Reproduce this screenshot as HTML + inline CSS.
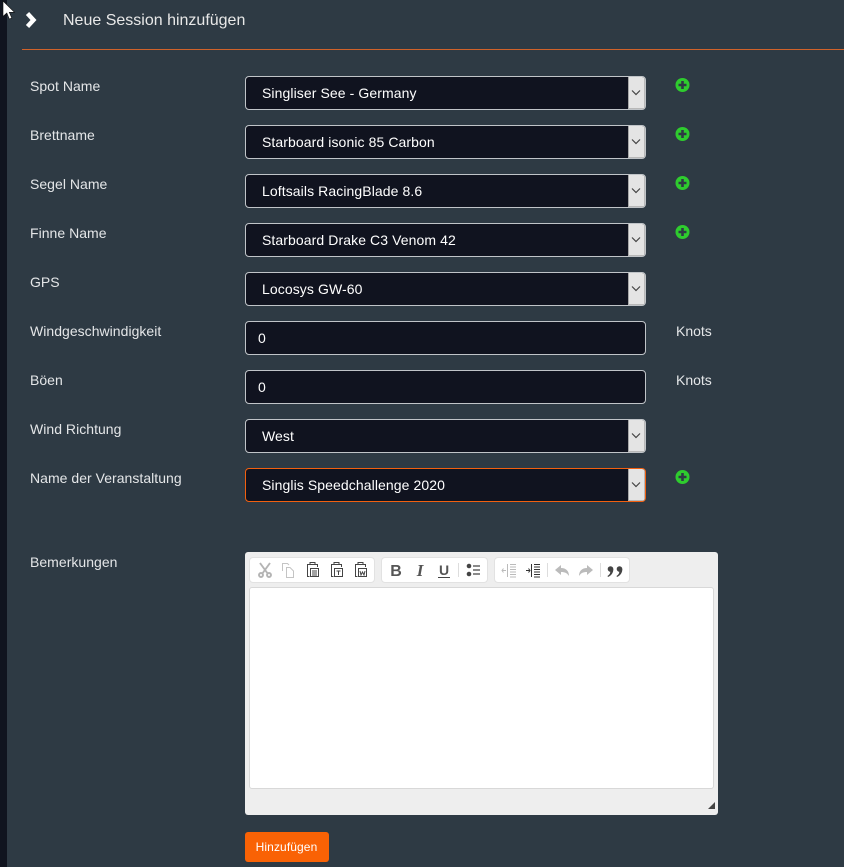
<!DOCTYPE html>
<html><head><meta charset="utf-8"><style>
*{box-sizing:border-box}
html,body{margin:0;padding:0}
body{width:844px;height:867px;background:#2e3a44;position:relative;overflow:hidden;font-family:"Liberation Sans",Arial,sans-serif;color:#e4e6e8;font-size:14px}
.a{position:absolute}
.side{left:0;top:0;width:7px;height:867px;background:#10141f}
.lb{position:absolute;left:30px;line-height:20px;white-space:nowrap;letter-spacing:.03px}
.c{position:absolute;left:245px;width:401px;height:34px;background:#10131f;border:1px solid #c0c4c8;border-radius:4px;color:#fff;line-height:32px;padding-left:16px;white-space:nowrap;overflow:hidden;letter-spacing:.09px}
.c.in{padding-left:12px}
.c.o{border-color:#f26010}
.c i{position:absolute;right:0;top:0;width:17px;height:32px;background:#e4e4e4;border-left:1px solid #a8a8a8;border-right:1px solid #b8b8b8;border-bottom:1px solid #b8b8b8;display:block}
.c i svg{position:absolute;left:2px;top:12px}
.pl{position:absolute;left:675px}
.k{position:absolute;left:676px;line-height:20px}
.ed{left:245px;top:552px;width:473px;height:263px;background:#eeeeee;border-radius:3px}
.g{position:absolute;top:5px;height:26px;background:#fff;border-radius:4px;border:1px solid #e2e2e2}
.ar{left:249px;top:587px;width:465px;height:202px;background:#fff;border:1px solid #d8d8d8;border-radius:3px}
.btn{left:245px;top:832px;width:84px;height:30px;background:#f96205;border-radius:3px;color:#fff;font-size:12px;line-height:30px;text-align:center;letter-spacing:.1px;padding-right:1px}
svg{display:block}
</style></head><body>
<div class="a side"></div>
<svg class="a" style="left:2px;top:0" width="14" height="20" viewBox="0 0 14 20"><path d="M1 1V16.500L4.800 13L7.300 19L9.800 18L7.300 12.300H12.500Z" fill="#fff" stroke="#111" stroke-width=".6"/></svg>
<svg class="a" style="left:24px;top:11px" width="14" height="18" viewBox="0 0 14 18"><path d="M3.500 2.500L9.500 9L3.500 15.500" fill="none" stroke="#fff" stroke-width="4.400"/></svg>
<div class="a" style="left:63px;top:11px;font-size:16px;line-height:20px;color:#e8e8e8;white-space:nowrap">Neue Session hinzufügen</div>
<div class="a" style="left:22px;top:49px;width:822px;height:1px;background:#d0622a"></div>

<div class="lb" style="top:76px">Spot Name</div>
<div class="c" style="top:76px">Singliser See - Germany<i><svg width="10" height="8" viewBox="0 0 10 8"><path d="M1 1.500L5 5.500L9 1.500" fill="none" stroke="#444" stroke-width="1.2"/></svg></i></div>
<svg class="pl" style="top:78px" width="15" height="15" viewBox="0 0 15 15"><circle cx="7.500" cy="7" r="7" fill="#2ecc2e"/><path d="M7.500 3V11M3.500 7H11.500" stroke="#2e3a44" stroke-width="2.600"/></svg>

<div class="lb" style="top:125px">Brettname</div>
<div class="c" style="top:125px">Starboard isonic 85 Carbon<i><svg width="10" height="8" viewBox="0 0 10 8"><path d="M1 1.500L5 5.500L9 1.500" fill="none" stroke="#444" stroke-width="1.2"/></svg></i></div>
<svg class="pl" style="top:127px" width="15" height="15" viewBox="0 0 15 15"><circle cx="7.500" cy="7" r="7" fill="#2ecc2e"/><path d="M7.500 3V11M3.500 7H11.500" stroke="#2e3a44" stroke-width="2.600"/></svg>

<div class="lb" style="top:174px">Segel Name</div>
<div class="c" style="top:174px">Loftsails RacingBlade 8.6<i><svg width="10" height="8" viewBox="0 0 10 8"><path d="M1 1.500L5 5.500L9 1.500" fill="none" stroke="#444" stroke-width="1.2"/></svg></i></div>
<svg class="pl" style="top:176px" width="15" height="15" viewBox="0 0 15 15"><circle cx="7.500" cy="7" r="7" fill="#2ecc2e"/><path d="M7.500 3V11M3.500 7H11.500" stroke="#2e3a44" stroke-width="2.600"/></svg>

<div class="lb" style="top:223px">Finne Name</div>
<div class="c" style="top:223px">Starboard Drake C3 Venom 42<i><svg width="10" height="8" viewBox="0 0 10 8"><path d="M1 1.500L5 5.500L9 1.500" fill="none" stroke="#444" stroke-width="1.2"/></svg></i></div>
<svg class="pl" style="top:225px" width="15" height="15" viewBox="0 0 15 15"><circle cx="7.500" cy="7" r="7" fill="#2ecc2e"/><path d="M7.500 3V11M3.500 7H11.500" stroke="#2e3a44" stroke-width="2.600"/></svg>

<div class="lb" style="top:272px">GPS</div>
<div class="c" style="top:272px">Locosys GW-60<i><svg width="10" height="8" viewBox="0 0 10 8"><path d="M1 1.500L5 5.500L9 1.500" fill="none" stroke="#444" stroke-width="1.2"/></svg></i></div>

<div class="lb" style="top:321px">Windgeschwindigkeit</div>
<div class="c in" style="top:321px">0</div>
<div class="k" style="top:321px">Knots</div>

<div class="lb" style="top:370px">Böen</div>
<div class="c in" style="top:370px">0</div>
<div class="k" style="top:370px">Knots</div>

<div class="lb" style="top:419px">Wind Richtung</div>
<div class="c" style="top:419px">West<i><svg width="10" height="8" viewBox="0 0 10 8"><path d="M1 1.500L5 5.500L9 1.500" fill="none" stroke="#444" stroke-width="1.2"/></svg></i></div>

<div class="lb" style="top:468px">Name der Veranstaltung</div>
<div class="c o" style="top:468px">Singlis Speedchallenge 2020<i><svg width="10" height="8" viewBox="0 0 10 8"><path d="M1 1.500L5 5.500L9 1.500" fill="none" stroke="#444" stroke-width="1.2"/></svg></i></div>
<svg class="pl" style="top:470px" width="15" height="15" viewBox="0 0 15 15"><circle cx="7.500" cy="7" r="7" fill="#2ecc2e"/><path d="M7.500 3V11M3.500 7H11.500" stroke="#2e3a44" stroke-width="2.600"/></svg>

<div class="lb" style="top:552px">Bemerkungen</div>
<div class="a ed">
  <div class="g" style="left:4px;width:126px"></div>
  <div class="g" style="left:136px;width:107px"></div>
  <div class="g" style="left:249px;width:136px"></div>
  <svg class="a" style="left:0;top:0" width="473" height="40" viewBox="245 552 473 40">
    <g fill="none" stroke="#b4b4b4" stroke-width="1.900"><path d="M260 563L268 574M270 563L262 574"/><circle cx="261" cy="575" r="2"/><circle cx="269" cy="575" r="2"/></g>
    <g fill="none" stroke="#c4c4c4" stroke-width="1"><path d="M282.500 571V563.500H287.500L289 565"/><path d="M286.500 567.500H290L293.500 571V577.500H286.500Z"/></g>
    <g fill="none" stroke="#444" stroke-width="1"><path d="M309.500 576.500H307.500V564.500H317.500V567"/><path d="M310 564V562.500H315V564"/><rect x="310.500" y="568.500" width="8" height="8"/><path d="M312 571H317M312 573H317M312 575H317"/></g>
    <g fill="none" stroke="#444" stroke-width="1"><path d="M333.500 576.500H331.500V564.500H341.500V567"/><path d="M334 564V562.500H339V564"/><rect x="334.500" y="568.500" width="8" height="8"/><path d="M336.500 571H340.500M338.500 571V575"/></g>
    <g fill="none" stroke="#444" stroke-width="1"><path d="M357.500 576.500H355.500V564.500H365.500V567"/><path d="M358 564V562.500H363V564"/><rect x="358.500" y="568.500" width="8" height="8"/><path d="M360 571L361 575L362.500 572L364 575L365 571"/></g>
    <text x="396" y="576" text-anchor="middle" font-family="Liberation Sans" font-weight="700" font-size="16" fill="#555">B</text>
    <text x="420" y="576" text-anchor="middle" font-family="Liberation Serif" font-weight="700" font-style="italic" font-size="17" fill="#555">I</text>
    <text x="444" y="575" text-anchor="middle" font-family="Liberation Sans" font-weight="700" font-size="14" fill="#555">U</text>
    <path d="M438 577.500H450" stroke="#444" stroke-width="1"/>
    <path d="M458.500 563V577" stroke="#ddd"/>
    <circle cx="469" cy="566" r="2.300" fill="#444"/><circle cx="469" cy="574" r="2.300" fill="#444"/>
    <path d="M473 566H480M473 570H480M473 574H480" stroke="#444" stroke-width="1.300"/>
    <g stroke="#bbb" stroke-width="1" fill="none"><path d="M507.500 564V577"/><path d="M510 564.500H516M510 567H516M510 569.500H516M510 572H516M510 574.500H516M510 577H516"/><path d="M502 570.500H506M503.500 568.500L502 570.500L503.500 572.500"/></g>
    <g stroke="#333" stroke-width="1" fill="none"><path d="M531.500 564V577"/><path d="M534 564.500H540M534 567H540M534 569.500H540M534 572H540M534 574.500H540M534 577H540"/><path d="M526 570.500H530M528.500 568.500L530 570.500L528.500 572.500"/></g>
    <path d="M547.500 563V577M600.500 563V577" stroke="#ddd"/>
    <path d="M555 570L561 565V568C566 568 569 571 569 576C567 573 565 572 561 572V575Z" fill="#bbb"/>
    <path d="M593 570L587 565V568C582 568 579 571 579 576C581 573 583 572 587 572V575Z" fill="#bbb"/>
    <circle cx="610.500" cy="569" r="2.800" fill="#444"/>
    <path d="M613.300 569C613.500 572.500 611.500 575.500 608 577L607.500 576C609.500 574.800 610.300 573.300 610.300 571.500Z" fill="#444"/>
    <circle cx="619.500" cy="569" r="2.800" fill="#444"/>
    <path d="M622.300 569C622.500 572.500 620.500 575.500 617 577L616.500 576C618.500 574.800 619.300 573.300 619.300 571.500Z" fill="#444"/>
  </svg>
  <svg class="a" style="left:463px;top:250px" width="7" height="7" viewBox="0 0 7 7"><path d="M7 0V7H0Z" fill="#444"/></svg>
</div>
<div class="a ar"></div>
<div class="a btn">Hinzufügen</div>
</body></html>
